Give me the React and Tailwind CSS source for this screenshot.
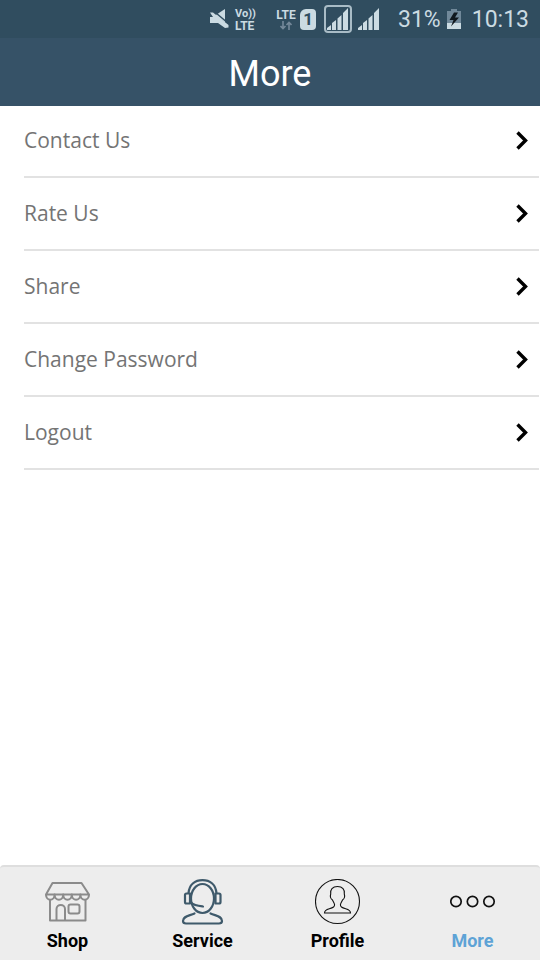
const items = ['Contact Us', 'Rate Us', 'Share', 'Change Password', 'Logout'];

function MuteIcon() {
  return (
    <svg width="20" height="20" viewBox="0 0 20 20" fill="#cbdbe2" aria-hidden="true">
      <path d="M6 6.500 16 0v13.500z" />
      <path d="M1 3.500h3L19.500 16v2.500L16 19 9 14H1V8h3z" />
      <path d="M4 1.500 19.500 14.500" stroke="#304d5f" strokeWidth="1.500" />
    </svg>
  );
}

function SignalBars() {
  return (
    <svg width="22" height="22" viewBox="0 0 22 22" fill="#cbdbe2" aria-hidden="true">
      <path d="M0 22v-2l4-3v5zM5 22v-7l4-3v10zM10.500 22V10.500l4-3.500v15zM16 22V5l5-5v22z" />
    </svg>
  );
}

function StatusBar() {
  return (
    <div className="flex h-[38px] items-center justify-end bg-[#304d5f] pr-[11px] text-[#cbdbe2]">
      <MuteIcon />
      <div className="ml-[6px] flex w-[22px] flex-col pt-[2px] leading-[12px] font-bold">
        <span className="text-[11px] whitespace-nowrap">Vo))</span>
        <span className="text-[12px]">LTE</span>
      </div>
      <div className="ml-[18px] flex w-[22px] flex-col items-center">
        <span className="text-[12px] leading-[12px] font-bold">LTE</span>
        <svg width="12" height="9" viewBox="0 0 12 9" fill="none" stroke="#75899a" strokeWidth="1.600" aria-hidden="true">
          <path d="M3 0v7M.5 5 3 7.500 5.500 5M9 9V1.500M6.500 4 9 1.500 11.500 4" />
        </svg>
      </div>
      <div className="ml-[3px] flex h-[21px] w-[16px] items-center justify-center rounded-sm rounded-tl-md bg-[#cbdbe2] text-[17px] leading-[21px] font-bold text-[#304d5f]">
        1
      </div>
      <div className="ml-[8px] flex h-[28px] w-[28px] items-center justify-center rounded-sm border-2 border-[#a9bcc6]">
        <SignalBars />
      </div>
      <div className="ml-[6px]">
        <SignalBars />
      </div>
      <span className="ml-[18px] pt-[3px] text-[23px]">31%</span>
      <svg className="ml-[6px]" width="14" height="20" viewBox="0 0 14 20" aria-hidden="true">
        <path d="M4 0h6v2h4v13H0V2h4z" fill="#71899a" />
        <path d="M0 14h14v6H0z" fill="#cbdbe2" />
        <path d="M7 3.500 2.500 11h4L4 17.500 12 8.500H8L11 3.500z" fill="#10181e" />
      </svg>
      <span className="ml-[11px] pt-[3px] text-[23px]">10:13</span>
    </div>
  );
}

function Chevron() {
  return (
    <svg width="12" height="20" viewBox="0 0 12 20" fill="none" stroke="#000" strokeWidth="3.400" aria-hidden="true">
      <path d="M1.500 1.500 9.500 9.500 1.500 17.500" strokeLinejoin="miter" />
    </svg>
  );
}

function ShopIcon() {
  return (
    <svg width="46" height="46" viewBox="0 0 46 46" fill="none" stroke="#8b8b8b" strokeWidth="2" strokeLinejoin="round" aria-hidden="true">
      <path d="M7.500 4h29l7.500 11.500H1z" />
      <path d="M1 15.500c0 7 8.600 7 8.600 0 0 7 8.600 7 8.600 0 0 7 8.600 7 8.600 0 0 7 8.600 7 8.600 0 0 7 8.600 7 8.600 0" />
      <path d="M5 20.500V41.500h35.500V20.500M11.500 41.500V30c0-5.500 8.500-5.500 8.500 0v11.500" />
      <rect x="23.500" y="25.500" width="11" height="9" rx="2" />
    </svg>
  );
}

function ServiceIcon() {
  return (
    <svg width="46" height="46" viewBox="0 0 46 46" fill="none" stroke="#3f5a6b" strokeWidth="2.200" strokeLinecap="round" strokeLinejoin="round" aria-hidden="true">
      <ellipse cx="22.500" cy="19.500" rx="11.500" ry="14.500" />
      <path d="M8.500 14C9.500 5.500 15 1.200 22.500 1.200S35.500 5.500 36.500 14" />
      <path d="M10 14.500H6.500q-1.500 0-1.500 1.500v7q0 1.500 1.500 1.500H10zM35.500 14.500h3.500q1.500 0 1.500 1.500v7q0 1.500-1.500 1.500h-3.500z" />
      <path d="M11 23.500c3 3 8 3.500 12 4" />
      <path d="M14.500 34.500C9 37 3 37 3 42q0 2.500 3 2.500h33q3 0 3-2.500C42 37 36 37 30.500 34.500" />
    </svg>
  );
}

function ProfileIcon() {
  return (
    <svg width="46" height="46" viewBox="0 0 46 46" fill="none" stroke="#111" strokeWidth="1.100" aria-hidden="true">
      <circle cx="22.500" cy="22.500" r="22" />
      <path d="M22.500 7.500c-5 0-7.500 3-6.800 7.500-.9 3 .3 5 1.800 6 2 4 3 5 1 7-3 2.500-9 1.500-9 6h26c0-4.500-6-3.500-9-6-2-2-1-3 1-7 1.500-1 2.700-3 1.800-6C30 10.500 27.500 7.500 22.500 7.500z" />
    </svg>
  );
}

function MoreIcon() {
  return (
    <svg width="46" height="46" viewBox="0 0 46 46" fill="none" stroke="#111" strokeWidth="1.700" aria-hidden="true">
      <circle cx="6" cy="22.500" r="5.200" />
      <circle cx="22.500" cy="22.500" r="5.200" />
      <circle cx="39" cy="22.500" r="5.200" />
    </svg>
  );
}

const tabs = [
  { label: 'Shop', Icon: ShopIcon },
  { label: 'Service', Icon: ServiceIcon },
  { label: 'Profile', Icon: ProfileIcon },
  { label: 'More', Icon: MoreIcon, active: true },
];

export default function App() {
  return (
    <div className="flex min-h-screen flex-col bg-white font-['Roboto',sans-serif]">
      <StatusBar />
      <header className="flex h-[68px] items-center justify-center bg-[#365267] pt-1">
        <h1 className="text-4xl text-white">More</h1>
      </header>
      <main className="flex-1">
        <ul className="pr-px pl-6">
          {items.map((item) => (
            <li key={item} className="h-[73px] border-b-2 border-[#e2e2e2] first:h-[72px]">
              <button
                type="button"
                className="flex h-full w-full items-center justify-between pr-[11px] text-left font-['Open_Sans',sans-serif] text-[21px] text-[#747474]"
              >
                {item}
                <Chevron />
              </button>
            </li>
          ))}
        </ul>
      </main>
      <nav className="grid grid-cols-4 rounded-t-sm border-t-2 border-[#dedede] bg-[#ededed] pt-3 pb-[7px]">
        {tabs.map(({ label, Icon, active }) => (
          <a
            key={label}
            href={'#' + label.toLowerCase()}
            aria-current={active ? 'page' : undefined}
            className={'flex flex-col items-center gap-1 text-lg leading-6 font-bold ' + (active ? 'text-[#5ea3d6]' : 'text-black')}
          >
            <Icon />
            {label}
          </a>
        ))}
      </nav>
    </div>
  );
}
